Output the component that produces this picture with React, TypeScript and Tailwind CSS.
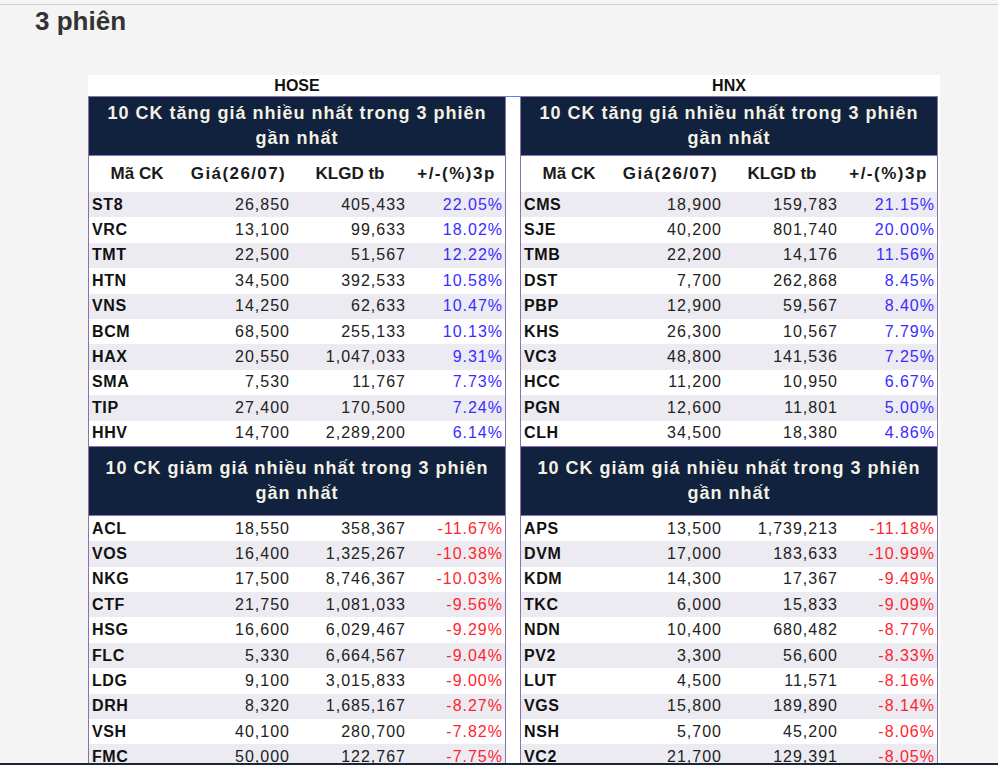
import React from "react";

type Row = [string, string, string, string];

const hoseUp: Row[] = [
  ["ST8", "26,850", "405,433", "22.05%"],
  ["VRC", "13,100", "99,633", "18.02%"],
  ["TMT", "22,500", "51,567", "12.22%"],
  ["HTN", "34,500", "392,533", "10.58%"],
  ["VNS", "14,250", "62,633", "10.47%"],
  ["BCM", "68,500", "255,133", "10.13%"],
  ["HAX", "20,550", "1,047,033", "9.31%"],
  ["SMA", "7,530", "11,767", "7.73%"],
  ["TIP", "27,400", "170,500", "7.24%"],
  ["HHV", "14,700", "2,289,200", "6.14%"],
];

const hnxUp: Row[] = [
  ["CMS", "18,900", "159,783", "21.15%"],
  ["SJE", "40,200", "801,740", "20.00%"],
  ["TMB", "22,200", "14,176", "11.56%"],
  ["DST", "7,700", "262,868", "8.45%"],
  ["PBP", "12,900", "59,567", "8.40%"],
  ["KHS", "26,300", "10,567", "7.79%"],
  ["VC3", "48,800", "141,536", "7.25%"],
  ["HCC", "11,200", "10,950", "6.67%"],
  ["PGN", "12,600", "11,801", "5.00%"],
  ["CLH", "34,500", "18,380", "4.86%"],
];

const hoseDown: Row[] = [
  ["ACL", "18,550", "358,367", "-11.67%"],
  ["VOS", "16,400", "1,325,267", "-10.38%"],
  ["NKG", "17,500", "8,746,367", "-10.03%"],
  ["CTF", "21,750", "1,081,033", "-9.56%"],
  ["HSG", "16,600", "6,029,467", "-9.29%"],
  ["FLC", "5,330", "6,664,567", "-9.04%"],
  ["LDG", "9,100", "3,015,833", "-9.00%"],
  ["DRH", "8,320", "1,685,167", "-8.27%"],
  ["VSH", "40,100", "280,700", "-7.82%"],
  ["FMC", "50,000", "122,767", "-7.75%"],
];

const hnxDown: Row[] = [
  ["APS", "13,500", "1,739,213", "-11.18%"],
  ["DVM", "17,000", "183,633", "-10.99%"],
  ["KDM", "14,300", "17,367", "-9.49%"],
  ["TKC", "6,000", "15,833", "-9.09%"],
  ["NDN", "10,400", "680,482", "-8.77%"],
  ["PV2", "3,300", "56,600", "-8.33%"],
  ["LUT", "4,500", "11,571", "-8.16%"],
  ["VGS", "15,800", "189,890", "-8.14%"],
  ["NSH", "5,700", "45,200", "-8.06%"],
  ["VC2", "21,700", "129,391", "-8.05%"],
];

const cols = "grid grid-cols-[96px_107px_116px_97px]";

function Block({ title, h }: { title: string; h: string }) {
  return (
    <div
      className={`${h} flex flex-col items-center justify-center bg-[#10223d] border-y border-[#8a72b0] text-[18px] font-bold leading-[25px] text-[#f4f1e4] tracking-[1px]`}
    >
      <span>{title}</span>
      <span>gần nhất</span>
    </div>
  );
}

function DataRows({ rows, up, greyFirst }: { rows: Row[]; up: boolean; greyFirst: boolean }) {
  return (
    <div>
      {rows.map((r, i) => {
        const grey = greyFirst ? i % 2 === 0 : i % 2 === 1;
        return (
          <div
            key={r[0]}
            className={`${cols} h-[25.4px] items-center text-[16px] tracking-[1px] text-[#222] ${grey ? "bg-[#ecebf1]" : "bg-white"}`}
          >
            <div className="pl-[3px] font-bold tracking-[0.6px] text-[#111]">{r[0]}</div>
            <div className="pr-[2px] text-right">{r[1]}</div>
            <div className="pr-[2px] text-right">{r[2]}</div>
            <div className={`pr-[2px] text-right ${up ? "text-[#3a2cff]" : "text-[#ff1f2e]"}`}>{r[3]}</div>
          </div>
        );
      })}
    </div>
  );
}

function Table({ up, down }: { up: Row[]; down: Row[] }) {
  return (
    <div className="flex flex-col border-x border-[#8a72b0] bg-white">
      <Block title="10 CK tăng giá nhiều nhất trong 3 phiên" h="h-[60px]" />
      <div className={`${cols} h-[36px] items-center text-[17px] font-bold text-[#1a1a1a] text-center`}>
        <div>Mã CK</div>
        <div className="tracking-[1.4px]">Giá(26/07)</div>
        <div>KLGD tb</div>
        <div className="tracking-[1.5px]">+/-(%)3p</div>
      </div>
      <DataRows rows={up} up greyFirst />
      <Block title="10 CK giảm giá nhiều nhất trong 3 phiên" h="h-[70px]" />
      <DataRows rows={down} up={false} greyFirst={false} />
    </div>
  );
}

export default function App() {
  return (
    <div className="h-[765px] w-[998px] overflow-hidden bg-[#f4f4f4] font-['Liberation_Sans',Arial,sans-serif] flex flex-col relative">
      <div className="h-[5px] border-b border-[#cfcfcf] shrink-0" />
      <h1 className="pl-[35px] pt-[1px] text-[26px] font-bold leading-[30px] text-[#333]">3 phiên</h1>
      <div className="ml-[88px] mt-[39px] w-[852px] bg-white flex-1">
        <div className="flex h-[21px] text-[16px] font-bold text-[#111] leading-[21px]">
          <div className="w-[418px] text-center">HOSE</div>
          <div className="w-[14px]" />
          <div className="w-[418px] text-center">HNX</div>
        </div>
        <div className="flex items-start">
          <Table up={hoseUp} down={hoseDown} />
          <div className="w-[14px] border-t border-[#5a7cff]" />
          <Table up={hnxUp} down={hnxDown} />
        </div>
      </div>
      <div className="absolute bottom-0 left-0 right-0 h-[2px] bg-[#1b2639]" />
    </div>
  );
}
